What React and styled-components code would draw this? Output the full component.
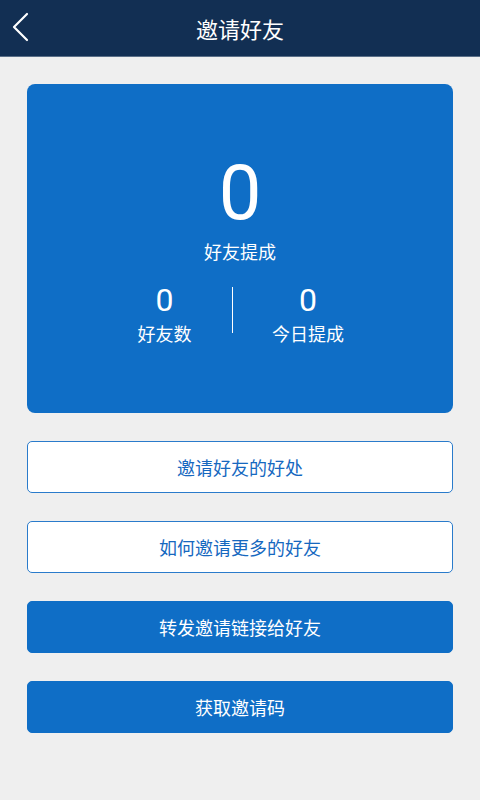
import React from "react";
import styled, { createGlobalStyle } from "styled-components";

const Global = createGlobalStyle`
  html, body { margin: 0; padding: 0; background: #efefef; }
  body { font-family: Roboto, "Noto Sans CJK SC", sans-serif; }
  * { box-sizing: border-box; }
`;

const Page = styled.div`
  width: 480px;
  min-height: 800px;
  background: #efefef;
`;

const Header = styled.header`
  position: relative;
  height: 57px;
  background: #122f53;
  border-bottom: 1px solid #5a6f88;
  display: flex;
  align-items: center;
  justify-content: center;
`;

const Back = styled.button`
  position: absolute;
  left: 0;
  top: 0;
  width: 44px;
  height: 56px;
  border: 0;
  padding: 0;
  background: transparent;
  display: flex;
  align-items: center;
  justify-content: center;
`;

const Title = styled.h1`
  margin: 0;
  font-family: "Noto Sans CJK SC", sans-serif;
  font-weight: 400;
  font-size: 22px;
  line-height: 22px;
  color: #ffffff;
`;

const Content = styled.main`
  padding: 27px 27px 0;
  display: flex;
  flex-direction: column;
  gap: 28px;
`;

const Card = styled.section`
  background: #0f6ec6;
  border-radius: 8px;
  padding: 71px 0 71px;
  display: flex;
  flex-direction: column;
  align-items: center;
  color: #ffffff;
`;

const Big = styled.div`
  font-family: Roboto, sans-serif;
  font-size: 76px;
  line-height: 76px;
`;

const Caption = styled.div`
  font-family: "Noto Sans CJK SC", sans-serif;
  font-size: 18px;
  line-height: 18px;
  margin-top: ${(p) => p.$top || 0}px;
`;

const Stats = styled.div`
  margin-top: 24px;
  display: grid;
  grid-template-columns: 135px 1px 150px;
`;

const Stat = styled.div`
  display: flex;
  flex-direction: column;
  align-items: center;
`;

const Num = styled.div`
  font-family: Roboto, sans-serif;
  font-size: 32px;
  line-height: 32px;
`;

const Divider = styled.div`
  width: 1px;
  height: 46px;
  margin-top: 3px;
  background: #ffffff;
`;

const Button = styled.button`
  height: 52px;
  width: 100%;
  border-radius: 5px;
  border: 1.5px solid ${(p) => (p.$solid ? "#0f6ec6" : "#2a7bcb")};
  background: ${(p) => (p.$solid ? "#0f6ec6" : "#ffffff")};
  color: ${(p) => (p.$solid ? "#ffffff" : "#1668bf")};
  font-family: "Noto Sans CJK SC", sans-serif;
  font-size: 18px;
  padding: 0;
  display: flex;
  align-items: center;
  justify-content: center;
`;

export default function App() {
  return (
    <Page>
      <Global />
      <Header>
        <Back aria-label="back">
          <svg width="44" height="56" viewBox="0 0 44 56">
            <polyline
              points="27,14 14,27 27,40"
              fill="none"
              stroke="#ffffff"
              strokeWidth="2.2"
              strokeLinecap="round"
              strokeLinejoin="round"
            />
          </svg>
        </Back>
        <Title>邀请好友</Title>
      </Header>
      <Content>
        <Card>
          <Big>0</Big>
          <Caption $top={11}>好友提成</Caption>
          <Stats>
            <Stat>
              <Num>0</Num>
              <Caption $top={8}>好友数</Caption>
            </Stat>
            <Divider />
            <Stat>
              <Num>0</Num>
              <Caption $top={8}>今日提成</Caption>
            </Stat>
          </Stats>
        </Card>
        <Button>邀请好友的好处</Button>
        <Button>如何邀请更多的好友</Button>
        <Button $solid>转发邀请链接给好友</Button>
        <Button $solid>获取邀请码</Button>
      </Content>
    </Page>
  );
}
